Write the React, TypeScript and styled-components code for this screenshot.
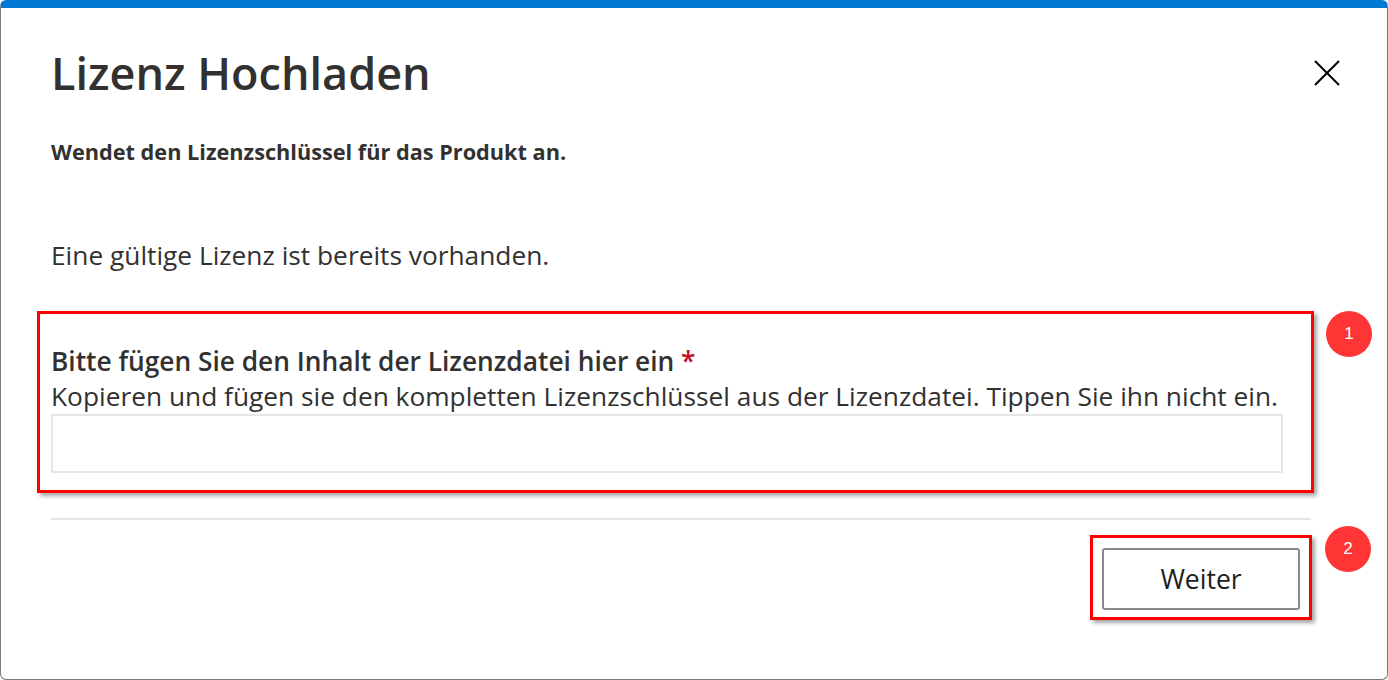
import React from "react";
import styled, { createGlobalStyle } from "styled-components";

const Global = createGlobalStyle`
  html, body { margin: 0; padding: 0; background: #fff; }
  body { font-family: "Open Sans", "Noto Sans", sans-serif; color: #323130; }
  * { box-sizing: border-box; }
`;

const Frame = styled.div`
  position: relative;
  width: 1388px;
  height: 680px;
  border: 1px solid #7a7a7a;
  border-top: 8px solid #0078d4;
  border-radius: 6px;
  background: #fff;
  overflow: hidden;
  display: flex;
  flex-direction: column;
`;

const Header = styled.div`
  display: flex;
  justify-content: space-between;
  align-items: center;
  padding: 36px 46px 0 50px;
`;

const Title = styled.h1`
  margin: 0;
  font-size: 45px;
  font-weight: 600;
  line-height: 58px;
  color: #323130;
`;

const CloseButton = styled.button`
  border: 0;
  background: transparent;
  padding: 0;
  width: 28px;
  height: 28px;
  display: flex;
  align-items: center;
  justify-content: center;
  cursor: pointer;
`;

const Subtitle = styled.p`
  margin: 37px 0 0 50px;
  font-size: 21.7px;
  font-weight: 700;
  line-height: 26px;
  color: #323130;
`;

const Info = styled.p`
  margin: 73px 0 0 50px;
  font-size: 26.3px;
  line-height: 34px;
  color: #323130;
`;

const Annotated = styled.div`
  position: relative;
  border: 3px solid #ff0000;
  box-shadow: 3px 3px 4px rgba(0, 0, 0, 0.35);
`;

const FieldBox = styled(Annotated)`
  margin: 39px 0 0 36px;
  width: 1277px;
  padding: 29px 28px 17px 11px;
`;

const Badge = styled.span<{ $top: number; $right: number }>`
  position: absolute;
  top: ${(p) => p.$top}px;
  right: ${(p) => p.$right}px;
  width: 46px;
  height: 46px;
  border-radius: 50%;
  background: #ff3535;
  color: #fff;
  font-family: "Liberation Sans", Arial, sans-serif;
  font-size: 17px;
  display: flex;
  align-items: center;
  justify-content: center;
`;

const Label = styled.label`
  display: block;
  font-size: 26.3px;
  font-weight: 600;
  line-height: 36px;
  color: #323130;
`;

const Required = styled.span`
  color: #c50f1f;
`;

const Description = styled.div`
  font-size: 26.3px;
  line-height: 35px;
  color: #323130;
  white-space: nowrap;
`;

const Input = styled.input`
  display: block;
  width: 100%;
  height: 59px;
  margin: 0;
  border: 2px solid #e6e6e6;
  outline: none;
  font-size: 20px;
  padding: 0 10px;
`;

const Divider = styled.hr`
  margin: 25px 0 0 50px;
  width: 1260px;
  border: 0;
  border-top: 2px solid #e6e6e6;
`;

const Footer = styled.div`
  display: flex;
  justify-content: flex-end;
  padding: 15px 75px 0 0;
`;

const ButtonBox = styled(Annotated)`
  padding: 10px 9px 7px 9px;
`;

const Button = styled.button`
  width: 198px;
  height: 62px;
  border: 2px solid #8a8a8a;
  border-radius: 3px;
  background: #fff;
  font-family: "Open Sans", "Noto Sans", sans-serif;
  font-size: 26.5px;
  color: #201f1e;
  cursor: pointer;
`;

export default function App() {
  return (
    <>
      <Global />
      <Frame>
        <Header>
          <Title>Lizenz Hochladen</Title>
          <CloseButton aria-label="Schließen">
            <svg width="26" height="26" viewBox="0 0 26 26">
              <path d="M1 1 L25 25 M25 1 L1 25" stroke="#000" strokeWidth="2" fill="none" />
            </svg>
          </CloseButton>
        </Header>
        <Subtitle>Wendet den Lizenzschlüssel für das Produkt an.</Subtitle>
        <Info>Eine gültige Lizenz ist bereits vorhanden.</Info>
        <FieldBox>
          <Badge $top={-3} $right={-61}>1</Badge>
          <Label>
            Bitte fügen Sie den Inhalt der Lizenzdatei hier ein <Required>*</Required>
          </Label>
          <Description>
            Kopieren und fügen sie den kompletten Lizenzschlüssel aus der Lizenzdatei. Tippen Sie ihn nicht ein.
          </Description>
          <Input type="text" />
        </FieldBox>
        <Divider />
        <Footer>
          <ButtonBox>
            <Badge $top={-12} $right={-62}>2</Badge>
            <Button>Weiter</Button>
          </ButtonBox>
        </Footer>
      </Frame>
    </>
  );
}
